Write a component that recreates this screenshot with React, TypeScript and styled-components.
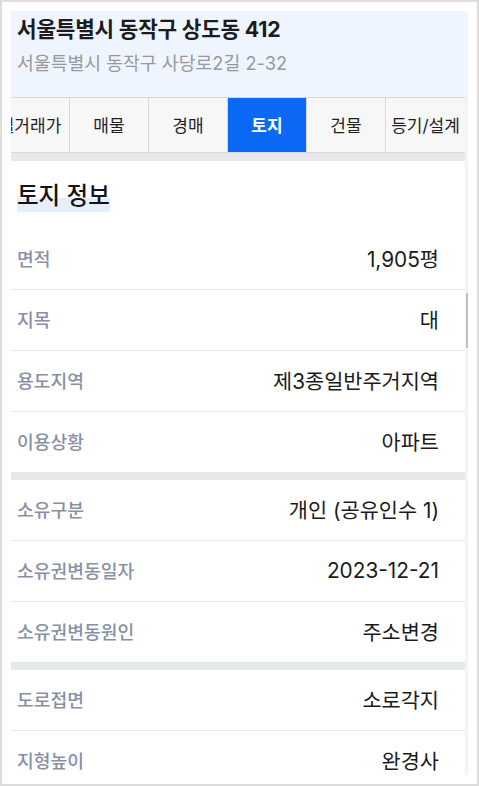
import React, { useLayoutEffect, useRef } from "react";
import styled, { createGlobalStyle } from "styled-components";

const GlobalStyle = createGlobalStyle`
  html, body { margin: 0; padding: 0; background: #ffffff; }
  body {
    font-family: Inter, "Noto Sans CJK KR", "Noto Sans", sans-serif;
    color: #1b1b1b;
    -webkit-font-smoothing: antialiased;
  }
  * { box-sizing: border-box; }
`;

const Frame = styled.div`
  width: 479px;
  height: 786px;
  border: 2px solid #dcdcdc;
  padding: 9px;
  background: #ffffff;
`;

const Panel = styled.div`
  display: flex;
  flex-direction: column;
  height: 100%;
  overflow: hidden;
`;

const Header = styled.header`
  height: 86px;
  flex: none;
  background: #eff5ff;
  padding: 4px 6px 0;
  display: flex;
  flex-direction: column;
  gap: 8px;
`;

const Title = styled.h1`
  margin: 0;
  font-size: 21.3px;
  line-height: 28px;
  font-weight: 700;
  color: #1c1c1c;
  letter-spacing: -0.2px;
`;

const Subtitle = styled.p`
  margin: 0;
  font-size: 18.3px;
  line-height: 24px;
  font-weight: 400;
  color: #999999;
`;

const Body = styled.div`
  flex: 1;
  min-height: 0;
  display: flex;
`;

const ScrollArea = styled.div`
  flex: 1;
  min-width: 0;
  display: flex;
  flex-direction: column;
  overflow: hidden;
`;

const Track = styled.div`
  width: 3px;
  flex: none;
  background: #f3f3f3;
`;

const Thumb = styled.div<{ $top: number; $height: number }>`
  margin-top: ${(p) => p.$top}px;
  margin-left: 1px;
  width: 2px;
  height: ${(p) => p.$height}px;
  background: #c2c2c2;
`;

const TabBar = styled.nav`
  flex: none;
  height: 56px;
  display: flex;
  overflow-x: auto;
  scrollbar-width: none;
  background: #f7f7f7;
  border-top: 1px solid #d8d8d8;
  border-bottom: 1px solid #d8d8d8;
  &::-webkit-scrollbar { display: none; }
`;

const Tab = styled.button<{ $active?: boolean }>`
  flex: none;
  width: 79px;
  height: 100%;
  margin: 0;
  padding: 0 0 1px;
  border: none;
  border-right: 1px solid #d8d8d8;
  font-family: inherit;
  font-size: 17px;
  font-weight: ${(p) => (p.$active ? 700 : 400)};
  color: ${(p) => (p.$active ? "#ffffff" : "#1f1f1f")};
  background: ${(p) => (p.$active ? "#0b69f5" : "transparent")};
  white-space: nowrap;
  cursor: pointer;
  &:last-child { border-right: none; }
`;

const Content = styled.div`
  flex: 1;
  min-height: 0;
  overflow: hidden;
  background: #ffffff;
  border-top: 8px solid #e6e9ec;
`;

const Section = styled.section`
  & + & { border-top: 8px solid #e6e9ec; }
`;

const SectionHead = styled.div`
  padding: 21px 6px 17px;
`;

const SectionTitle = styled.h2`
  display: inline-block;
  margin: 0;
  font-size: 23.5px;
  line-height: 27px;
  padding-bottom: 3px;
  font-weight: 500;
  color: #141414;
  background: linear-gradient(to bottom, transparent 53%, #e6eefb 53%);
`;

const Row = styled.div`
  height: 60px;
  display: flex;
  align-items: center;
  justify-content: space-between;
  padding: 0 26px 0 6px;
  & + & { border-top: 1px solid #e8e8e8; height: 61px; }
`;

const Label = styled.span`
  font-size: 18.2px;
  color: #8790a5;
  font-weight: 500;
  padding-bottom: 2px;
`;

const Value = styled.span`
  font-size: 20.8px;
  color: #1b1b1b;
  font-weight: 400;
  padding-bottom: 2px;
`;

const tabs = ["실거래가", "매물", "경매", "토지", "건물", "등기/설계"];

const sections: { title?: string; rows: [string, string][] }[] = [
  {
    title: "토지 정보",
    rows: [
      ["면적", "1,905평"],
      ["지목", "대"],
      ["용도지역", "제3종일반주거지역"],
      ["이용상황", "아파트"],
    ],
  },
  {
    rows: [
      ["소유구분", "개인 (공유인수 1)"],
      ["소유권변동일자", "2023-12-21"],
      ["소유권변동원인", "주소변경"],
    ],
  },
  {
    rows: [
      ["도로접면", "소로각지"],
      ["지형높이", "완경사"],
      ["지형형상", "사다리형"],
    ],
  },
];

export default function App() {
  const tabRef = useRef<HTMLElement>(null);
  useLayoutEffect(() => {
    if (tabRef.current) tabRef.current.scrollLeft = 20;
  }, []);

  return (
    <>
      <GlobalStyle />
      <Frame>
        <Panel>
          <Header>
            <Title>서울특별시 동작구 상도동 412</Title>
            <Subtitle>서울특별시 동작구 사당로2길 2-32</Subtitle>
          </Header>
          <Body>
            <ScrollArea>
              <TabBar ref={tabRef}>
                {tabs.map((t) => (
                  <Tab key={t} $active={t === "토지"}>
                    {t}
                  </Tab>
                ))}
              </TabBar>
              <Content>
                {sections.map((s, i) => (
                  <Section key={i}>
                    {s.title && (
                      <SectionHead>
                        <SectionTitle>{s.title}</SectionTitle>
                      </SectionHead>
                    )}
                    {s.rows.map(([k, v]) => (
                      <Row key={k}>
                        <Label>{k}</Label>
                        <Value>{v}</Value>
                      </Row>
                    ))}
                  </Section>
                ))}
              </Content>
            </ScrollArea>
            <Track>
              <Thumb $top={196} $height={55} />
            </Track>
          </Body>
        </Panel>
      </Frame>
    </>
  );
}
